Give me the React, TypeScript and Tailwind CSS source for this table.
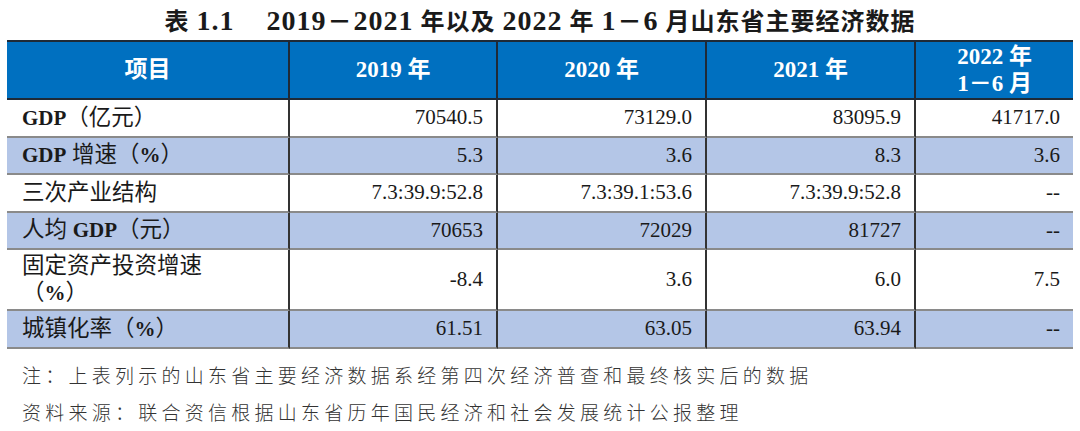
type Row = { label: React.ReactNode; values: string[]; shaded: boolean; tall?: boolean };

const B = ({ children }: { children: React.ReactNode }) => <span className="font-bold text-[21px]">{children}</span>;
const L = ({ children }: { children: React.ReactNode }) => <span className="text-[28px]">{children}</span>;
const Dash = () => <span className="mx-[1px]">－</span>;

const rows: Row[] = [
  { label: <><B>GDP</B>（亿元）</>, values: ['70540.5', '73129.0', '83095.9', '41717.0'], shaded: false },
  { label: <><B>GDP</B> 增速（<B>%</B>）</>, values: ['5.3', '3.6', '8.3', '3.6'], shaded: true },
  { label: <>三次产业结构</>, values: ['7.3:39.9:52.8', '7.3:39.1:53.6', '7.3:39.9:52.8', '--'], shaded: false },
  { label: <>人均 <B>GDP</B>（元）</>, values: ['70653', '72029', '81727', '--'], shaded: true },
  {
    label: (
      <>
        固定资产投资增速
        <br />
        （<B>%</B>）
      </>
    ),
    values: ['-8.4', '3.6', '6.0', '7.5'],
    shaded: false,
    tall: true,
  },
  { label: <>城镇化率（<B>%</B>）</>, values: ['61.51', '63.05', '63.94', '--'], shaded: true },
];

const headers = ['项目', '2019 年', '2020 年', '2021 年'];

export default function App() {
  return (
    <div className="w-[1080px] h-[431px] bg-white text-[#1a1a1a] font-[Liberation_Serif,Noto_Sans_CJK_SC,serif]">
      <h1 className="h-[40px] flex items-center justify-center text-[24px] font-bold leading-none tracking-[1px] pt-[1px]">
        <span>
          表 <L>1.1</L>
          <span className="inline-block w-[32px]" />
          <L>2019</L>
          <Dash />
          <L>2021</L> 年以及 <L>2022</L> 年 <L>1</L>
          <Dash />
          <L>6</L> 月山东省主要经济数据
        </span>
      </h1>

      <div className="ml-[7px] w-[1066px] grid grid-cols-[283px_208px_209px_209px_157px]">
        {/* header */}
        {headers.map((h, i) => (
          <div
            key={h}
            className={`h-[60px] bg-[#0070c0] text-white font-bold text-[23px] flex items-center justify-center border-y-2 border-[#1f2a36] ${i < 4 ? 'border-r-2' : ''}`}
          >
            {h}
          </div>
        ))}
        <div className="h-[60px] bg-[#0070c0] text-white font-bold text-[23px] leading-[27px] flex flex-col items-center justify-center border-y-2 border-[#1f2a36]">
          <span>2022 年</span>
          <span>1－6 月</span>
        </div>

        {rows.map((r, ri) =>
          [r.label, ...r.values].map((v, ci) => (
            <div
              key={`${ri}-${ci}`}
              className={`${r.tall ? 'h-[61px]' : 'h-[37.5px]'} ${r.shaded ? 'bg-[#b4c6e7]' : 'bg-white'} border-b-2 border-[#8a8a8a] flex items-center ${
                ci === 0 ? 'pl-[15px] leading-[27px] text-[22.5px]' : 'justify-end pr-[13px] text-[21px]'
              } ${ci < 4 ? 'border-r-2 border-r-[#333333]' : ''}`}
            >
              <div>{v}</div>
            </div>
          ))
        )}
      </div>

      <div className="pl-[22px] pt-[7px] text-[19px] tracking-[4.25px] text-[#333333] font-[Noto_Sans_CJK_SC,sans-serif] font-light leading-[37px]">
        <p>注：上表列示的山东省主要经济数据系经第四次经济普查和最终核实后的数据</p>
        <p>资料来源：联合资信根据山东省历年国民经济和社会发展统计公报整理</p>
      </div>
    </div>
  );
}
